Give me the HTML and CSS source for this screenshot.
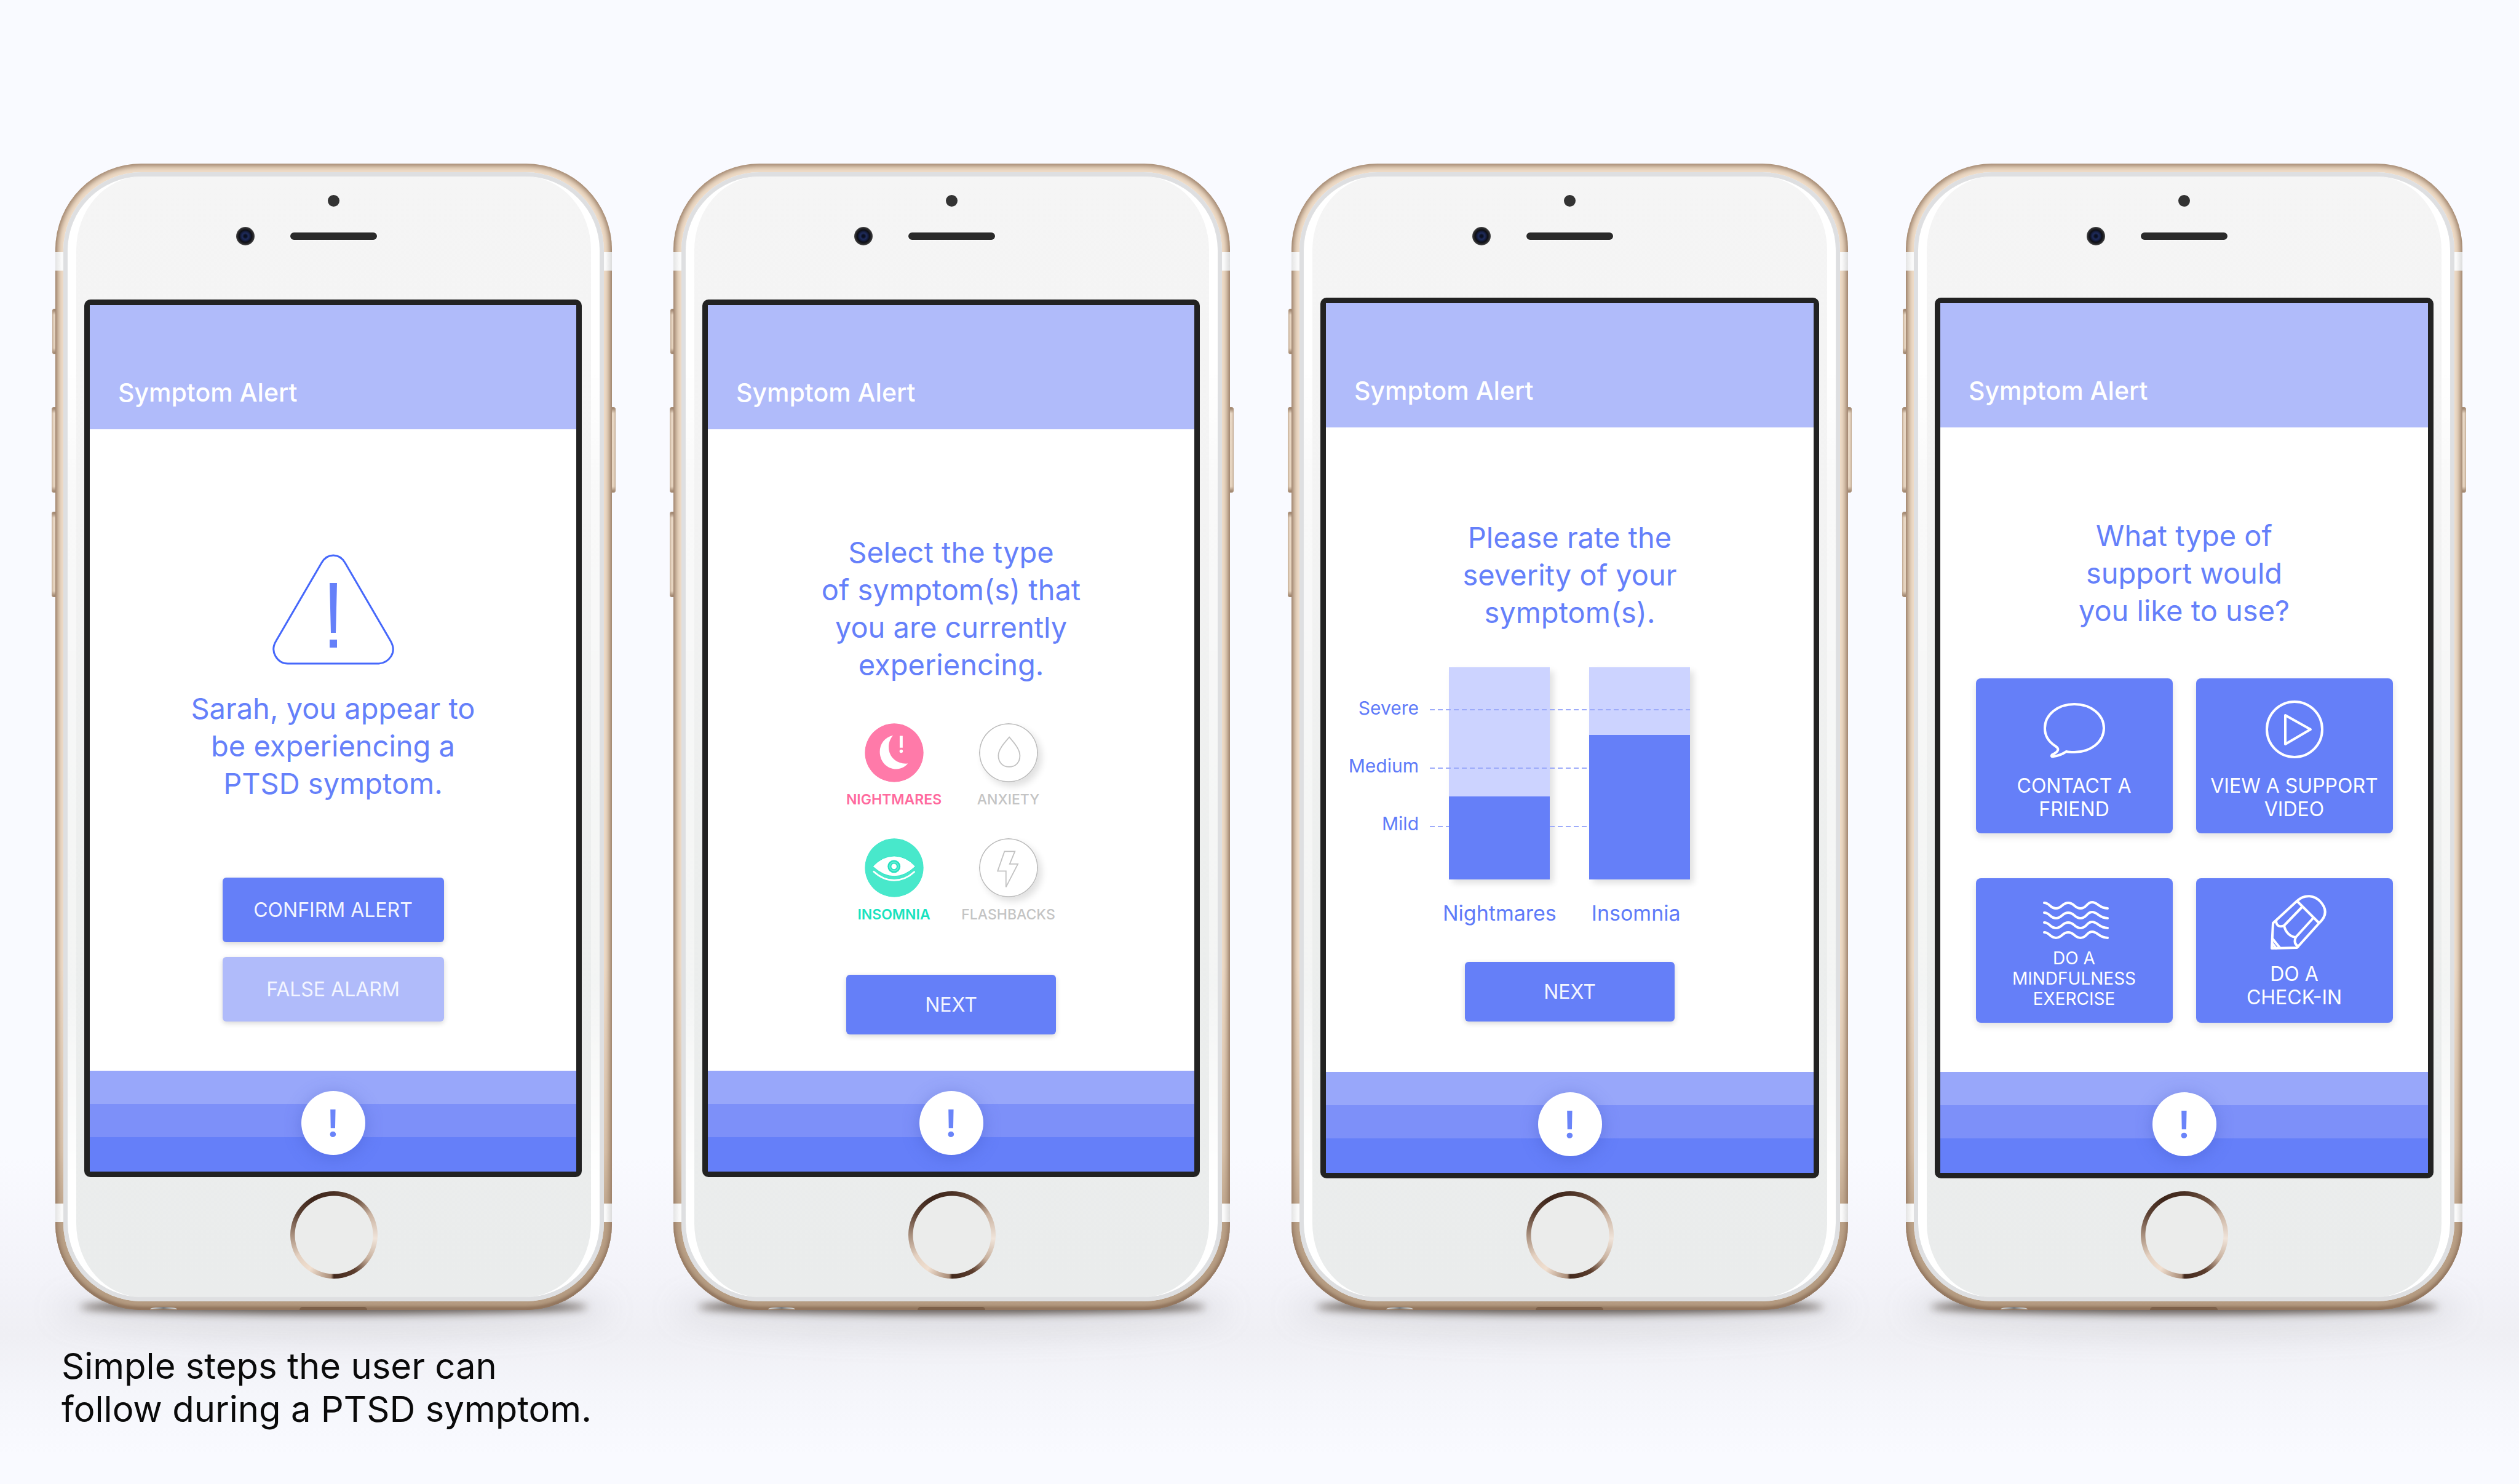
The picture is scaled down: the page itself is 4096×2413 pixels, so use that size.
FILE: index.html
```html
<!DOCTYPE html>
<html lang="en">
<head>
<meta charset="utf-8">
<meta name="viewport" content="width=device-width, initial-scale=1">
<title>Symptom Alert</title>
<link rel="stylesheet" href="styles.css">
</head>
<body>
<main class="showcase">
  <div class="devices">

    <section class="device">
      <span class="key key-mute"></span><span class="key key-up"></span><span class="key key-down"></span><span class="key key-power"></span>
      <div class="shell">
        <span class="antenna antenna-top"></span><span class="antenna antenna-bottom"></span>
        <span class="jack"></span><span class="port"></span>
        <div class="face">
          <div class="forehead"><span class="sensor"></span><div class="ear-row"><span class="camera"></span><span class="speaker"></span></div></div>
          <div class="screen">
            <header class="app-bar"><h2 class="app-title">Symptom Alert</h2></header>
            <div class="view view-alert">
              <svg class="warning" viewBox="0 0 200 180" aria-hidden="true">
                <path d="M81 14Q88 2 100 2T119 14L193 141Q201 155 194 166T174 178H26Q13 178 6 166T7 141Z" fill="none" stroke="#4668fb" stroke-width="3"/>
                <path d="M94 47h12l-2 81h-8zM94 139h12v13H94z" fill="#6580f9"/>
              </svg>
              <p class="message">Sarah, you appear to<br>be experiencing a<br>PTSD symptom.</p>
              <div class="choices">
                <button class="btn btn-tall">CONFIRM ALERT</button>
                <button class="btn btn-tall btn-soft">FALSE ALARM</button>
              </div>
            </div>
            <footer class="tab-bar"><button class="alert-btn" aria-label="Alert">!</button></footer>
          </div>
          <div class="chin"><button class="home" aria-label="Home"></button></div>
        </div>
      </div>
    </section>

    <section class="device">
      <span class="key key-mute"></span><span class="key key-up"></span><span class="key key-down"></span><span class="key key-power"></span>
      <div class="shell">
        <span class="antenna antenna-top"></span><span class="antenna antenna-bottom"></span>
        <span class="jack"></span><span class="port"></span>
        <div class="face">
          <div class="forehead"><span class="sensor"></span><div class="ear-row"><span class="camera"></span><span class="speaker"></span></div></div>
          <div class="screen">
            <header class="app-bar"><h2 class="app-title">Symptom Alert</h2></header>
            <div class="view view-select">
              <p class="message">Select the type<br>of symptom(s) that<br>you are currently<br>experiencing.</p>
              <div class="symptoms">
                <label class="symptom symptom-pink">
                  <input class="symptom-input" type="checkbox" checked>
                  <svg class="symptom-icon" viewBox="135 98 312 312" aria-hidden="true">
                    <circle cx="291" cy="254" r="155" fill="#ff7aa9"/>
                    <path d="M285 162C240 172 215 208 215 248C215 300 253 340 302 340C327 340 348 329 363 311C308 315 262 280 262 224C262 200 270 179 285 162Z" fill="#fff"/>
                    <path d="M320 165h16v62h-16z" fill="#fff"/><circle cx="328" cy="246" r="9" fill="#fff"/>
                  </svg>
                  <span>NIGHTMARES</span>
                </label>
                <label class="symptom">
                  <input class="symptom-input" type="checkbox">
                  <svg class="symptom-icon symptom-off" viewBox="743 95 318 318" aria-hidden="true">
                    <circle cx="902" cy="254" r="156" fill="#fff" stroke="#bdbdbd" stroke-width="6"/>
                    <path d="M906 170C880 200 847 235 847 270C847 307 872 330 905 330S963 307 963 270C963 235 930 198 906 170Z" fill="none" stroke="#c2c2c2" stroke-width="6"/>
                  </svg>
                  <span>ANXIETY</span>
                </label>
                <label class="symptom symptom-teal">
                  <input class="symptom-input" type="checkbox" checked>
                  <svg class="symptom-icon" viewBox="137 714 312 312" aria-hidden="true">
                    <circle cx="293" cy="870" r="155" fill="#48e8cb"/>
                    <path d="M180 863Q230 808 293 808T405 863Q350 915 293 915T180 863Z" fill="#fff" stroke="#22e3c1" stroke-width="3"/>
                    <circle cx="292" cy="863" r="34" fill="#26dfbf"/><circle cx="292" cy="863" r="23" fill="none" stroke="#5eeed5" stroke-width="6"/><circle cx="292" cy="863" r="14" fill="#fff"/>
                    <path d="M185 890Q235 936 293 936T399 892" fill="none" stroke="#fff" stroke-width="9" stroke-linecap="round"/>
                  </svg>
                  <span>INSOMNIA</span>
                </label>
                <label class="symptom">
                  <input class="symptom-input" type="checkbox">
                  <svg class="symptom-icon symptom-off" viewBox="743 714 318 318" aria-hidden="true">
                    <circle cx="902" cy="873" r="156" fill="#fff" stroke="#bdbdbd" stroke-width="6"/>
                    <path d="M880 785H936L908 853H952L888 977V891H843Z" fill="none" stroke="#c2c2c2" stroke-width="6"/>
                  </svg>
                  <span>FLASHBACKS</span>
                </label>
              </div>
              <button class="btn">NEXT</button>
            </div>
            <footer class="tab-bar"><button class="alert-btn" aria-label="Alert">!</button></footer>
          </div>
          <div class="chin"><button class="home" aria-label="Home"></button></div>
        </div>
      </div>
    </section>

    <section class="device device-large">
      <span class="key key-mute"></span><span class="key key-up"></span><span class="key key-down"></span><span class="key key-power"></span>
      <div class="shell">
        <span class="antenna antenna-top"></span><span class="antenna antenna-bottom"></span>
        <span class="jack"></span><span class="port"></span>
        <div class="face">
          <div class="forehead"><span class="sensor"></span><div class="ear-row"><span class="camera"></span><span class="speaker"></span></div></div>
          <div class="screen">
            <header class="app-bar"><h2 class="app-title">Symptom Alert</h2></header>
            <div class="view view-rate">
              <p class="message">Please rate the<br>severity of your<br>symptom(s).</p>
              <div class="chart">
                <div class="levels"><span>Severe</span><span>Medium</span><span>Mild</span></div>
                <div class="plot">
                  <div class="rules"><i class="rule"></i><i class="rule"></i><i class="rule"></i></div>
                  <div class="bar"><div class="bar-fill" style="height:39%"></div></div>
                  <div class="bar"><div class="bar-fill" style="height:68%"></div></div>
                </div>
                <div class="names"><span>Nightmares</span><span>Insomnia</span></div>
              </div>
              <button class="btn">NEXT</button>
            </div>
            <footer class="tab-bar"><button class="alert-btn" aria-label="Alert">!</button></footer>
          </div>
          <div class="chin"><button class="home" aria-label="Home"></button></div>
        </div>
      </div>
    </section>

    <section class="device device-large">
      <span class="key key-mute"></span><span class="key key-up"></span><span class="key key-down"></span><span class="key key-power"></span>
      <div class="shell">
        <span class="antenna antenna-top"></span><span class="antenna antenna-bottom"></span>
        <span class="jack"></span><span class="port"></span>
        <div class="face">
          <div class="forehead"><span class="sensor"></span><div class="ear-row"><span class="camera"></span><span class="speaker"></span></div></div>
          <div class="screen">
            <header class="app-bar"><h2 class="app-title">Symptom Alert</h2></header>
            <div class="view view-support">
              <p class="message">What type of<br>support would<br>you like to use?</p>
              <div class="cards">
                <button class="card">
                  <svg class="card-icon" width="102" height="91" viewBox="0 0 102 91" aria-hidden="true"><path d="M38 80C42 81 46 81 51 81C78 81 99 64 99 42S78 3 51 3S3 20 3 42C3 54 9 64 20 71C28 76 24 81 15 85C13 87 14 89 17 88C26 87 32 84 38 80Z"/></svg>
                  <span>CONTACT A<br>FRIEND</span>
                </button>
                <button class="card">
                  <svg class="card-icon" width="94" height="94" viewBox="0 0 94 94" aria-hidden="true"><circle cx="47" cy="47" r="45"/><path d="M32 24L73 47L32 71Z"/></svg>
                  <span>VIEW A SUPPORT<br>VIDEO</span>
                </button>
                <button class="card card-mindful">
                  <svg class="card-icon" width="114" height="64" viewBox="-6 0 114 64" aria-hidden="true">
                    <path d="M2 3C11 3 11 12 21 12S31 3 41 3S51 12 61 12S71 2 80 2S91 12 105 12"/>
                    <path d="M2 19C11 19 11 28 21 28S31 19 41 19S51 28 61 28S71 18 80 18S91 28 105 28"/>
                    <path d="M2 35C11 35 11 44 21 44S31 35 41 35S51 44 61 44S71 34 80 34S91 44 105 44"/>
                    <path d="M2 51C11 51 11 60 21 60S31 51 41 51S51 60 61 60S71 50 80 50S91 60 105 60"/>
                  </svg>
                  <span>DO A<br>MINDFULNESS<br>EXERCISE</span>
                </button>
                <button class="card card-checkin">
                  <svg class="card-icon" width="106" height="90" viewBox="-14 0 106 90" aria-hidden="true">
                    <path d="M2 87L4 46L43 10C56 -2 72 1 81 11C91 22 92 34 79 46L43 86Z"/>
                    <path d="M43 10L79 46M52 19L22 50M70 37L41 69M9 42C9 51 16 53 22 50C24 60 31 68 41 69C38 76 40 81 45 84M3 71L15 86M3 79L9 87"/>
                  </svg>
                  <span>DO A<br>CHECK-IN</span>
                </button>
              </div>
            </div>
            <footer class="tab-bar"><button class="alert-btn" aria-label="Alert">!</button></footer>
          </div>
          <div class="chin"><button class="home" aria-label="Home"></button></div>
        </div>
      </div>
    </section>

  </div>
  <p class="caption">Simple steps the user can<br>follow during a PTSD symptom.</p>
</main>
</body>
</html>
```
FILE: styles.css
```css
* { box-sizing: border-box; }

body {
  margin: 0;
  min-height: 100vh;
  font-family: Inter, "Liberation Sans", sans-serif;
  background: linear-gradient(#f9faff 0, #f9faff 78%, #f3f3f9 86%, #efeff4 90%, #f5f6fb 94%, #f9faff 98%);
}

button {
  border: 0;
  padding: 0;
  font: inherit;
  color: inherit;
  cursor: pointer;
}

.showcase { padding: 266px 92px 0 90px; }

/* Devices */
.devices { display: flex; }

.device {
  position: relative;
  isolation: isolate;
  display: flex;
  flex: 1;
  min-height: 1864px;
}
.device + .device { margin-left: 100px; }
.device:last-child { margin-left: 94px; }

/* contact shadow on the floor */
.device::before,
.device::after {
  content: "";
  position: absolute;
  z-index: -1;
  border-radius: 50%;
}
.device::before {
  left: 40px;
  right: 40px;
  bottom: -7px;
  height: 24px;
  background: rgba(60, 48, 38, 0.8);
  filter: blur(7px);
}
.device::after {
  left: 0;
  right: 0;
  bottom: -40px;
  height: 80px;
  background: rgba(120, 118, 122, 0.14);
  filter: blur(24px);
}

.shell {
  position: relative;
  display: flex;
  flex: 1;
  padding: 14px 13px;
  border-radius: 140px;
  background: linear-gradient(#efdcc7 0, #efdcc7 70%, #d9c3ab 86%, #bda48a 92%, #b59c82 100%);
  box-shadow: inset 0 0 9px 4px #9b7f68, inset 0 -5px 4px -1px #77593f;
}

.antenna {
  position: absolute;
  left: 0;
  right: 0;
  height: 30px;
  background: linear-gradient(90deg, #e4e4e4, #fafafa 10px, #fafafa calc(100% - 10px), #dcdcdc);
}
.antenna-top { top: 144px; }
.antenna-bottom { bottom: 143px; }

.jack {
  position: absolute;
  left: 154px;
  bottom: 1px;
  width: 44px;
  height: 4px;
  border-radius: 50% 50% 0 0 / 100% 100% 0 0;
  background: linear-gradient(90deg, #ddd, #777 50%, #ddd);
}
.port {
  position: absolute;
  left: 397px;
  bottom: 0;
  width: 110px;
  height: 5px;
  border-radius: 12px 12px 0 0;
  background: #7b5f48;
}

.key {
  position: absolute;
  z-index: -1;
  left: -6px;
  width: 14px;
  height: 139px;
  border-radius: 4px;
  background: linear-gradient(#8a6e58 0, #e9d8c6 10px, #e6d4c0 calc(100% - 10px), #8a6e58 100%);
  box-shadow: inset 0 0 3px 1px #b59b83;
}
.key-mute { top: 236px; left: -5px; height: 74px; }
.key-up { top: 396px; }
.key-down { top: 566px; }
.key-power { top: 396px; left: auto; right: -6px; }

.face {
  position: relative;
  isolation: isolate;
  display: flex;
  flex: 1;
  flex-direction: column;
  border-radius: 127px;
  background: linear-gradient(#f5f5f5 0, #f3f3f3 30%, #eceeed 65%, #eaecec 100%);
  box-shadow: inset 0 0 1px 7px #dedfe1;
}
/* bright glass edge that tapers into the corners */
.face::before {
  content: "";
  position: absolute;
  z-index: -1;
  inset: 7px;
  border: 0 solid #fff;
  border-width: 0 14px;
  border-radius: 120px;
  mask-image: linear-gradient(#000 0, #000 16%, rgba(0, 0, 0, 0.5) 28%, rgba(0, 0, 0, 0.4) 72%, #000 90%);
}

.forehead {
  display: flex;
  flex-direction: column;
  align-items: center;
  gap: 33px;
  height: 207px;
  padding-top: 37px;
}
.sensor {
  width: 19px;
  height: 19px;
  border-radius: 50%;
  background: #333;
}
.ear-row {
  display: grid;
  grid-template-columns: 1fr 141px 1fr;
  column-gap: 58px;
  align-items: center;
  align-self: stretch;
}
.camera {
  justify-self: end;
  width: 30px;
  height: 30px;
  border-radius: 50%;
  background: radial-gradient(circle at 50% 50%, #0a0f20 2px, #1f2c5c 5px, #141b38 8px, #0e0f14 10px, #2b2b2e 13px, #4a4a4a 15px);
}
.speaker {
  height: 12px;
  border-radius: 6px;
  background: #2a2a2a;
  box-shadow: 0 0 2px 1px #fff;
}

.chin {
  display: flex;
  justify-content: center;
  height: 202px;
  padding-top: 23px;
}
.home {
  width: 142px;
  height: 142px;
  border-radius: 50%;
  background:
    radial-gradient(circle, #ebeceb 63px, transparent 64px),
    conic-gradient(#4a3023, #6f5341 35deg, #c9b2a0 60deg, #f0e4da 95deg, #c7b09d 125deg, #5b3d2d 150deg, #43291c 180deg, #a98c77 184deg, #f0dfd0 215deg, #e3d0c0 240deg, #a78e7c 270deg, #5c4133 300deg, #3d251a 330deg, #4a3023);
}

/* App */
.screen {
  display: flex;
  flex: 1;
  flex-direction: column;
  margin: 0 36px 0 34px;
  border: 9px solid #222;
  border-radius: 10px;
  background: #fff;
}
.device-large .forehead { height: 204px; }
.device-large .screen { margin: 0 34px; }
.device-large .chin { height: 200px; padding-top: 21px; }

.app-bar {
  display: flex;
  align-items: flex-end;
  height: 202px;
  padding: 0 46px 36px;
  background: #b0bbfa;
}
.app-title {
  margin: 0;
  font-size: 41px;
  line-height: 48px;
  font-weight: 500;
  color: #fff;
}

.view {
  display: flex;
  flex: 1;
  flex-direction: column;
  align-items: center;
}
.view-alert { padding-top: 203px; }
.view-select { padding-top: 169px; }
.view-rate { padding-top: 148px; }
.view-support { padding-top: 145px; }

.message {
  margin: 0;
  font-size: 47px;
  line-height: 61px;
  text-align: center;
  color: #6580fa;
}

.btn {
  width: 341px;
  height: 97px;
  border-radius: 6px;
  font-size: 32px;
  line-height: 40px;
  color: #f3f5ff;
  background: #657ff8;
  box-shadow: 0 3px 8px rgba(0, 0, 0, 0.16);
}
.btn-tall { width: 360px; height: 105px; }
.btn-soft { background: #b0bbfa; }

.warning {
  width: 200px;
  height: 180px;
  margin-bottom: 40px;
}
.choices {
  display: flex;
  flex-direction: column;
  gap: 24px;
  margin-top: 123px;
}

.symptoms {
  display: grid;
  grid-template-columns: 186px 186px;
  row-gap: 49px;
  margin: 65px 0 84px;
}
.symptom {
  display: flex;
  flex-direction: column;
  align-items: center;
  gap: 14px;
  font-size: 23px;
  line-height: 28px;
  font-weight: 500;
  color: #c4c4c4;
}
.symptom-input {
  position: absolute;
  width: 1px;
  height: 1px;
  margin: 0;
  opacity: 0;
}
.symptom-icon {
  width: 96px;
  height: 96px;
  border-radius: 50%;
}
.symptom-off { box-shadow: 6px 7px 12px rgba(0, 0, 0, 0.12); }
.symptom-pink { font-weight: 600; color: #ff6a9e; }
.symptom-teal { font-weight: 600; color: #19e3c0; }

.chart {
  display: grid;
  grid-template-columns: 151px 423px;
  column-gap: 18px;
  row-gap: 35px;
  align-self: flex-start;
  margin: 59px 0;
  color: #5f7bf9;
}
.levels {
  display: flex;
  flex-direction: column;
  gap: 58px;
  padding-top: 48px;
  text-align: right;
  font-size: 30px;
  line-height: 36px;
}
.plot {
  position: relative;
  display: flex;
  justify-content: space-between;
  height: 345px;
  padding-left: 31px;
}
.rules {
  position: absolute;
  z-index: 1;
  inset: 0;
  display: flex;
  flex-direction: column;
  gap: 93px;
  padding-top: 68px;
}
.rule {
  height: 2px;
  background: repeating-linear-gradient(90deg, #9dabfa 0 8px, transparent 8px 13px);
}
.bar {
  display: flex;
  align-items: flex-end;
  width: 164px;
  background: #ccd3ff;
  box-shadow: 6px 6px 10px rgba(0, 0, 0, 0.12);
}
.bar-fill {
  position: relative;
  z-index: 2;
  width: 100%;
  background: #657ff8;
}
.names {
  display: flex;
  grid-column: 2;
  gap: 57px;
  padding-left: 21px;
  font-size: 34px;
  line-height: 40px;
}

.cards {
  display: grid;
  grid-template-columns: 320px 320px;
  grid-template-rows: 252px 235px;
  gap: 73px 38px;
  margin-top: 80px;
}
.card {
  display: flex;
  flex-direction: column;
  align-items: center;
  justify-content: flex-end;
  gap: 26px;
  padding-bottom: 20px;
  border-radius: 8px;
  font-size: 32px;
  line-height: 38px;
  color: #fff;
  background: #657ff8;
  box-shadow: 0 5px 12px rgba(0, 0, 0, 0.12);
}
.card-mindful { gap: 13px; padding-bottom: 22px; font-size: 28px; line-height: 33px; }
.card-checkin { gap: 20px; padding-bottom: 22px; }
.card-icon {
  fill: none;
  stroke: #fff;
  stroke-width: 4;
  stroke-linejoin: round;
  stroke-linecap: round;
}

.tab-bar {
  display: flex;
  align-items: flex-start;
  justify-content: center;
  height: 164px;
  padding-top: 33px;
  background: linear-gradient(#98a7fa 0 54px, #7d90f9 54px 108px, #657ff9 108px);
}
.alert-btn {
  width: 104px;
  height: 104px;
  border-radius: 50%;
  font-size: 60px;
  line-height: 104px;
  font-weight: 600;
  color: #6a84f9;
  background: #fff;
  box-shadow: 0 4px 28px rgba(60, 80, 190, 0.35);
}

.caption {
  margin: 56px 0 0;
  padding: 0 10px 87px;
  font-size: 58px;
  line-height: 70px;
  color: #0a0a0a;
}
```
